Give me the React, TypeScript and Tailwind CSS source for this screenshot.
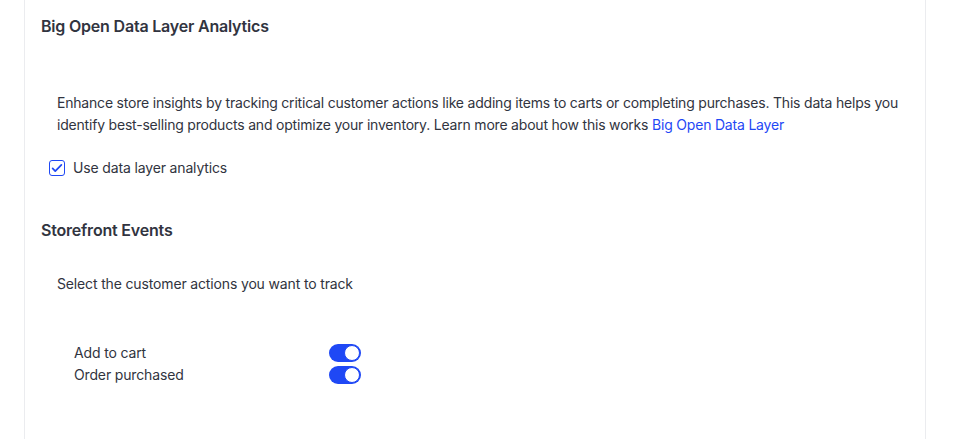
import { useState } from "react";

const events = [
  { id: "add_to_cart", label: "Add to cart" },
  { id: "order_purchased", label: "Order purchased" },
];

function Toggle({ on, onChange }: { on: boolean; onChange: () => void }) {
  return (
    <button
      type="button"
      onClick={onChange}
      className={`relative flex h-[18px] w-8 items-center rounded-full ${on ? "bg-[#1f48f5]" : "bg-[#c5c9d8]"}`}
    >
      <span
        className={`absolute top-[1px] h-4 w-4 rounded-full border border-[#1f48f5] bg-white ${on ? "left-[15px]" : "left-[1px]"}`}
      />
    </button>
  );
}

export default function App() {
  const [useLayer, setUseLayer] = useState(true);
  const [enabled, setEnabled] = useState<Record<string, boolean>>({ add_to_cart: true, order_purchased: true });

  return (
    <div className="min-h-screen bg-white font-['Inter',sans-serif] text-[#313440] tracking-[-0.15px]">
      <div className="ml-6 h-[439px] w-[902px] border-x border-[#ebecef] bg-white px-4 pt-[14px]">
        <h2 className="text-base leading-6 font-semibold tracking-[-0.2px]">Big Open Data Layer Analytics</h2>

        <p className="mt-[54px] pl-4 text-sm leading-[22px] tracking-[-0.2px]">
          Enhance store insights by tracking critical customer actions like adding items to carts or completing purchases. This data helps you
          identify best-selling products and optimize your inventory. Learn more about how this works{" "}
          <a href="#" className="text-[#1f48f5]">Big Open Data Layer</a>
        </p>

        <label className="mt-[22px] flex h-5 items-center gap-2 pl-2 text-sm">
          <span
            onClick={() => setUseLayer(!useLayer)}
            className="flex h-4 w-4 items-center justify-center rounded-[3px] border border-[#1f48f5] bg-white"
          >
            {useLayer && (
              <svg viewBox="0 0 16 16" className="h-3.5 w-3.5" fill="none" stroke="#1f48f5" strokeWidth="2" strokeLinecap="round" strokeLinejoin="round">
                <path d="M3 8.5l3 3 7-7" />
              </svg>
            )}
          </span>
          Use data layer analytics
        </label>

        <h2 className="mt-10 text-base leading-6 font-semibold tracking-[-0.2px]">Storefront Events</h2>

        <p className="mt-[31px] pl-4 text-sm leading-[22px]">Select the customer actions you want to track</p>

        <div className="mt-[47px] pl-[33px]">
          {events.map((e) => (
            <div key={e.id} className="flex h-[22px] items-center text-sm">
              <span className="w-[255px]">{e.label}</span>
              <Toggle on={enabled[e.id]} onChange={() => setEnabled({ ...enabled, [e.id]: !enabled[e.id] })} />
            </div>
          ))}
        </div>
      </div>
    </div>
  );
}
